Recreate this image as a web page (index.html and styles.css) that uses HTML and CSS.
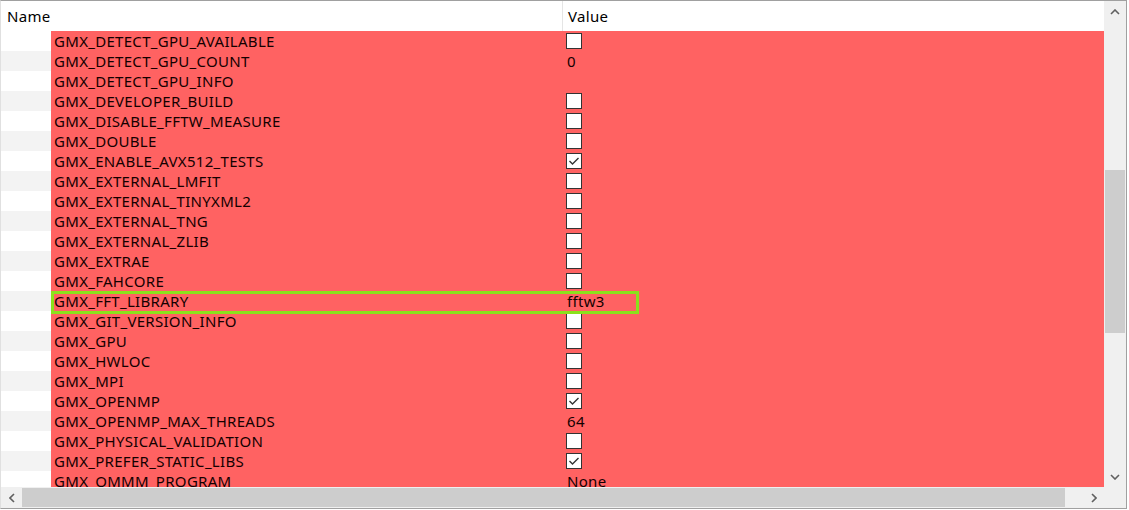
FILE: index.html
```html
<!DOCTYPE html>
<html>
<head>
<meta charset="utf-8">
<link rel="stylesheet" href="styles.css">
</head>
<body>
<div class="tree">
  <div class="main">
    <div class="header">
      <div class="hcell name-col">Name</div>
      <div class="hcell value-col">Value</div>
    </div>
    <div class="rows">
      <div class="row"><div class="indent"></div><div class="cell"><span class="key">GMX_DETECT_GPU_AVAILABLE</span><span class="val"><span class="cb"></span></span></div></div>
      <div class="row alt"><div class="indent"></div><div class="cell"><span class="key">GMX_DETECT_GPU_COUNT</span><span class="val"><span class="txt">0</span></span></div></div>
      <div class="row"><div class="indent"></div><div class="cell"><span class="key">GMX_DETECT_GPU_INFO</span><span class="val"></span></div></div>
      <div class="row alt"><div class="indent"></div><div class="cell"><span class="key">GMX_DEVELOPER_BUILD</span><span class="val"><span class="cb"></span></span></div></div>
      <div class="row"><div class="indent"></div><div class="cell"><span class="key">GMX_DISABLE_FFTW_MEASURE</span><span class="val"><span class="cb"></span></span></div></div>
      <div class="row alt"><div class="indent"></div><div class="cell"><span class="key">GMX_DOUBLE</span><span class="val"><span class="cb"></span></span></div></div>
      <div class="row"><div class="indent"></div><div class="cell"><span class="key">GMX_ENABLE_AVX512_TESTS</span><span class="val"><span class="cb checked"><svg viewBox="0 0 16 16" width="16" height="16"><polyline points="3.5,8 6.5,11 12.5,5" fill="none" stroke="#333" stroke-width="1.4"/></svg></span></span></div></div>
      <div class="row alt"><div class="indent"></div><div class="cell"><span class="key">GMX_EXTERNAL_LMFIT</span><span class="val"><span class="cb"></span></span></div></div>
      <div class="row"><div class="indent"></div><div class="cell"><span class="key">GMX_EXTERNAL_TINYXML2</span><span class="val"><span class="cb"></span></span></div></div>
      <div class="row alt"><div class="indent"></div><div class="cell"><span class="key">GMX_EXTERNAL_TNG</span><span class="val"><span class="cb"></span></span></div></div>
      <div class="row"><div class="indent"></div><div class="cell"><span class="key">GMX_EXTERNAL_ZLIB</span><span class="val"><span class="cb"></span></span></div></div>
      <div class="row alt"><div class="indent"></div><div class="cell"><span class="key">GMX_EXTRAE</span><span class="val"><span class="cb"></span></span></div></div>
      <div class="row"><div class="indent"></div><div class="cell"><span class="key">GMX_FAHCORE</span><span class="val"><span class="cb"></span></span></div></div>
      <div class="row alt"><div class="indent"></div><div class="cell"><span class="key">GMX_FFT_LIBRARY</span><span class="val"><span class="txt">fftw3</span></span></div></div>
      <div class="row"><div class="indent"></div><div class="cell"><span class="key">GMX_GIT_VERSION_INFO</span><span class="val"><span class="cb"></span></span></div></div>
      <div class="row alt"><div class="indent"></div><div class="cell"><span class="key">GMX_GPU</span><span class="val"><span class="cb"></span></span></div></div>
      <div class="row"><div class="indent"></div><div class="cell"><span class="key">GMX_HWLOC</span><span class="val"><span class="cb"></span></span></div></div>
      <div class="row alt"><div class="indent"></div><div class="cell"><span class="key">GMX_MPI</span><span class="val"><span class="cb"></span></span></div></div>
      <div class="row"><div class="indent"></div><div class="cell"><span class="key">GMX_OPENMP</span><span class="val"><span class="cb checked"><svg viewBox="0 0 16 16" width="16" height="16"><polyline points="3.5,8 6.5,11 12.5,5" fill="none" stroke="#333" stroke-width="1.4"/></svg></span></span></div></div>
      <div class="row alt"><div class="indent"></div><div class="cell"><span class="key">GMX_OPENMP_MAX_THREADS</span><span class="val"><span class="txt">64</span></span></div></div>
      <div class="row"><div class="indent"></div><div class="cell"><span class="key">GMX_PHYSICAL_VALIDATION</span><span class="val"><span class="cb"></span></span></div></div>
      <div class="row alt"><div class="indent"></div><div class="cell"><span class="key">GMX_PREFER_STATIC_LIBS</span><span class="val"><span class="cb checked"><svg viewBox="0 0 16 16" width="16" height="16"><polyline points="3.5,8 6.5,11 12.5,5" fill="none" stroke="#333" stroke-width="1.4"/></svg></span></span></div></div>
      <div class="row"><div class="indent"></div><div class="cell"><span class="key">GMX_QMMM_PROGRAM</span><span class="val"><span class="txt">None</span></span></div></div>
      <div class="highlight"></div>
    </div>
  </div>
  <div class="vscroll">
    <div class="arrow"><svg viewBox="0 0 10 6" width="10" height="6"><polyline points="1,5 5,1 9,5" fill="none" stroke="#606060" stroke-width="1.6"/></svg></div>
    <div class="vtrack"><div class="vthumb"></div></div>
    <div class="arrow"><svg viewBox="0 0 10 6" width="10" height="6"><polyline points="1,1 5,5 9,1" fill="none" stroke="#606060" stroke-width="1.6"/></svg></div>
  </div>
  <div class="hscroll">
    <div class="harrow"><svg viewBox="0 0 6 10" width="6" height="10"><polyline points="5,1 1,5 5,9" fill="none" stroke="#606060" stroke-width="1.6"/></svg></div>
    <div class="htrack"><div class="hthumb"></div></div>
    <div class="harrow"><svg viewBox="0 0 6 10" width="6" height="10"><polyline points="1,1 5,5 1,9" fill="none" stroke="#606060" stroke-width="1.6"/></svg></div>
  </div>
  <div class="corner"></div>
</div>
</body>
</html>
```
FILE: styles.css
```css
html, body {
  margin: 0;
  padding: 0;
  background: #ffffff;
}
body {
  width: 1129px;
  height: 510px;
  overflow: hidden;
  font-family: "Noto Sans", "Open Sans", "DejaVu Sans", sans-serif;
  font-size: 15px;
  letter-spacing: 0.3px;
  color: #140000;
}
.tree {
  width: 1125px;
  height: 507px;
  border-top: 1px solid #a0a0a0;
  border-right: 1px solid #a0a0a0;
  border-bottom: 1px solid #a0a0a0;
  border-left: 1px solid #e0e0e0;
  display: grid;
  grid-template-columns: 1103px 22px;
  grid-template-rows: 486px 21px;
}
.main {
  overflow: hidden;
  display: flex;
  flex-direction: column;
}
.header {
  height: 30px;
  flex: none;
  display: flex;
  background: #ffffff;
}
.hcell {
  line-height: 31px;
  color: #000;
}
.name-col {
  width: 555px;
  padding-left: 6px;
  border-right: 1px solid #e5e5e5;
}
.value-col {
  padding-left: 5px;
}
.rows {
  position: relative;
  flex: 1;
  overflow: hidden;
}
.row {
  height: 20px;
  display: flex;
}
.indent {
  width: 50px;
  flex: none;
  background: #ffffff;
}
.row.alt .indent {
  background: #f3f3f3;
}
.cell {
  flex: 1;
  background: #ff6262;
  display: flex;
  line-height: 20px;
}
.key {
  width: 512px;
  padding-left: 3px;
  flex: none;
  white-space: nowrap;
}
.val {
  display: flex;
  align-items: center;
}
.txt {
  padding-left: 1px;
}
.cb {
  width: 14px;
  height: 14px;
  border: 1px solid #333;
  background: #fff;
  display: block;
  position: relative;
}
.cb svg {
  position: absolute;
  left: -1px;
  top: -1px;
}
.highlight {
  position: absolute;
  left: 50px;
  top: 260px;
  width: 582px;
  height: 17px;
  border: 3px solid #8be21c;
}
.vscroll {
  background: #f0f0f0;
  display: flex;
  flex-direction: column;
  grid-row: 1;
  grid-column: 2;
}
.arrow {
  height: 21px;
  flex: none;
  display: flex;
  align-items: center;
  justify-content: center;
}
.vtrack {
  flex: 1;
  padding: 0 1px;
}
.vthumb {
  margin-top: 148px;
  height: 163px;
  background: #cdcdcd;
}
.hscroll {
  background: #f0f0f0;
  display: flex;
  grid-row: 2;
  grid-column: 1;
}
.harrow {
  width: 21px;
  flex: none;
  display: flex;
  align-items: center;
  justify-content: center;
}
.htrack {
  flex: 1;
  padding: 1px 0;
}
.hthumb {
  width: 1043px;
  height: 19px;
  background: #cdcdcd;
}
.corner {
  background: #f0f0f0;
  grid-row: 2;
  grid-column: 2;
}
```
